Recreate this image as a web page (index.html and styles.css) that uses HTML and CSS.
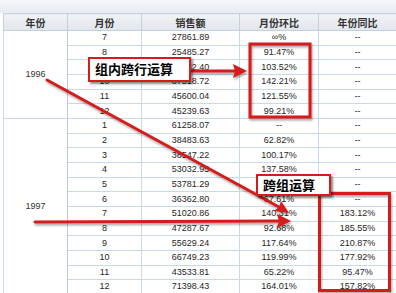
FILE: index.html
```html
<!DOCTYPE html>
<html lang="zh-CN">
<head>
<meta charset="utf-8">
<title>跨行运算</title>
<link rel="stylesheet" href="styles.css">
</head>
<body>
<div class="page">
  <div class="toolbar"></div>
  <table class="grid">
    <colgroup>
      <col class="c-year"><col class="c-month"><col class="c-sales"><col class="c-mom"><col class="c-yoy">
    </colgroup>
    <thead>
      <tr><th>年份</th><th>月份</th><th>销售额</th><th>月份环比</th><th>年份同比</th></tr>
    </thead>
    <tbody>
      <tr><td rowspan="6" class="year">1996</td><td>7</td><td>27861.89</td><td>∞%</td><td>--</td></tr>
      <tr><td>8</td><td>25485.27</td><td>91.47%</td><td>--</td></tr>
      <tr><td>9</td><td>26382.40</td><td>103.52%</td><td>--</td></tr>
      <tr><td>10</td><td>37518.72</td><td>142.21%</td><td>--</td></tr>
      <tr><td>11</td><td>45600.04</td><td>121.55%</td><td>--</td></tr>
      <tr class="group-end"><td>12</td><td>45239.63</td><td>99.21%</td><td>--</td></tr>
      <tr><td rowspan="12" class="year">1997</td><td>1</td><td>61258.07</td><td>--</td><td>--</td></tr>
      <tr><td>2</td><td>38483.63</td><td>62.82%</td><td>--</td></tr>
      <tr><td>3</td><td>38547.22</td><td>100.17%</td><td>--</td></tr>
      <tr><td>4</td><td>53032.95</td><td>137.58%</td><td>--</td></tr>
      <tr><td>5</td><td>53781.29</td><td>101.41%</td><td>--</td></tr>
      <tr><td>6</td><td>36362.80</td><td>67.61%</td><td>--</td></tr>
      <tr><td>7</td><td>51020.86</td><td>140.31%</td><td>183.12%</td></tr>
      <tr><td>8</td><td>47287.67</td><td>92.68%</td><td>185.55%</td></tr>
      <tr><td>9</td><td>55629.24</td><td>117.64%</td><td>210.87%</td></tr>
      <tr><td>10</td><td>66749.23</td><td>119.99%</td><td>177.92%</td></tr>
      <tr><td>11</td><td>43533.81</td><td>65.22%</td><td>95.47%</td></tr>
      <tr><td>12</td><td>71398.43</td><td>164.01%</td><td>157.82%</td></tr>
    </tbody>
  </table>

  <svg class="overlay" width="396" height="293" viewBox="0 0 396 293" aria-hidden="true">
    <defs>
      <filter id="sh" x="-20%" y="-20%" width="140%" height="160%">
        <feDropShadow dx="1" dy="2" stdDeviation="1" flood-color="#000" flood-opacity="0.35"/>
      </filter>
    </defs>
    <g filter="url(#sh)" fill="none" stroke="#d41c1c">
      <rect x="250" y="44" width="60" height="73" stroke-width="3"/>
      <rect x="319.5" y="193.5" width="70" height="97" stroke-width="3"/>
    </g>
    <g filter="url(#sh)" stroke="#d41c1c" fill="#d41c1c" stroke-linecap="round">
      <line x1="191" y1="71" x2="236" y2="71" stroke-width="3"/>
      <polygon points="247,71 233,64 235,71 233,78" stroke="none"/>
      <line x1="47" y1="80" x2="279" y2="207" stroke-width="3"/>
      <polygon points="289,213 274,211 279,207 281,201" stroke="none"/>
      <line x1="35" y1="222" x2="280" y2="221" stroke-width="3"/>
      <polygon points="291,221 277,214 279,221 277,228" stroke="none"/>
    </g>
  </svg>

  <div class="tag tag-inner">组内跨行运算</div>
  <div class="tag tag-cross">跨组运算</div>
</div>
</body>
</html>
```

FILE: styles.css
```css
html, body {
  margin: 0;
  padding: 0;
  background: #ffffff;
}

body {
  width: 396px;
  height: 293px;
  overflow: hidden;
  font-family: "Liberation Sans", "Noto Sans CJK SC", sans-serif;
}

.page {
  position: relative;
  width: 396px;
  height: 293px;
  overflow: hidden;
}

.toolbar {
  height: 13px;
  background: linear-gradient(#f5f7fa, #e7ecf2);
}

.grid {
  margin-left: 3px;
  width: 393px;
  border-collapse: collapse;
  table-layout: fixed;
}

.c-year { width: 64px; }
.c-month { width: 74px; }
.c-sales { width: 98px; }
.c-mom { width: 79px; }
.c-yoy { width: 78px; }

.grid th {
  height: 16px;
  padding: 0;
  border: 1px solid #c2d1df;
  background: linear-gradient(#f1f3f6, #e1e6ec);
  color: #333333;
  font: bold 10px "Noto Sans CJK SC", sans-serif;
  line-height: 15px;
  text-align: center;
}

.grid td {
  height: 13.667px;
  padding: 0;
  border: 1px solid #c8daea;
  color: #262626;
  font-size: 9px;
  line-height: 13px;
  text-align: center;
  white-space: nowrap;
}

.grid td.year {
  border-color: #c8daea #b9cbdc #c8daea #c8daea;
  font-size: 9px;
  color: #333333;
}

.overlay {
  position: absolute;
  left: 0;
  top: 0;
  pointer-events: none;
}

.tag {
  position: absolute;
  box-sizing: border-box;
  background: #ffffff;
  border: 2px solid #d41c1c;
  box-shadow: 2px 2px 2px rgba(0, 0, 0, 0.45);
  color: #000000;
  font: bold 13px "Noto Sans CJK SC", sans-serif;
  line-height: 20px;
  padding-left: 5px;
  white-space: nowrap;
}

.tag-inner {
  left: 88px;
  top: 57px;
  width: 103px;
  height: 25px;
}

.tag-cross {
  left: 256px;
  top: 174px;
  width: 75px;
  height: 22px;
  line-height: 18px;
}
```
